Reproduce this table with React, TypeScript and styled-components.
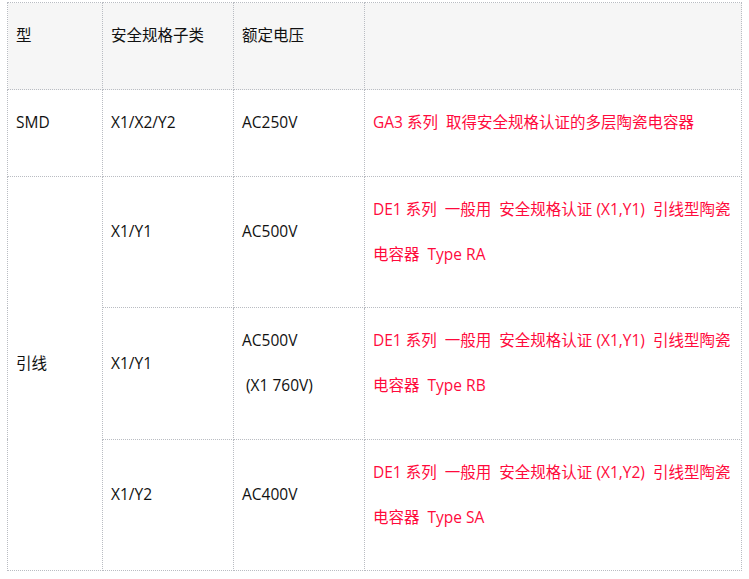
import * as React from "react";
import styled, { createGlobalStyle } from "styled-components";

const GlobalStyle = createGlobalStyle`
  html, body {
    margin: 0;
    padding: 0;
    background: #ffffff;
  }
`;

const Page = styled.div`
  padding: 2px 0 0 7px;
  font-family: "Open Sans", "Noto Sans CJK SC", sans-serif;
  font-size: 15.5px;
  color: #111111;
`;

const Table = styled.table`
  width: 734px;
  table-layout: fixed;
  border-collapse: collapse;
`;

const HeadCell = styled.th`
  padding: 10px 8px 11px;
  border: 1px dotted #b9bcc2;
  background-color: #f6f6f6;
  font-weight: 400;
  text-align: left;
  vertical-align: middle;
`;

const Cell = styled.td`
  padding: 10px 8px 10.6px;
  border: 1px dotted #b9bcc2;
  text-align: left;
  vertical-align: middle;
`;

const Text = styled.p<{ $accent?: boolean }>`
  margin: 0 0 20px;
  line-height: 45px;
  white-space: pre-wrap;
  color: ${p => (p.$accent ? "#ff0a3c" : "#111111")};
`;

const COLUMNS = [95, 131, 131, 377];

interface Row {
  kind?: { label: string; span: number };
  sub: string;
  voltage: string[];
  series: string[];
}

const ROWS: Row[] = [
  {
    kind: { label: "SMD", span: 1 },
    sub: "X1/X2/Y2",
    voltage: ["AC250V"],
    series: ["GA3 系列  取得安全规格认证的多层陶瓷电容器"]
  },
  {
    kind: { label: "引线", span: 3 },
    sub: "X1/Y1",
    voltage: ["AC500V"],
    series: ["DE1 系列  一般用  安全规格认证 (X1,Y1)  引线型陶瓷", "电容器  Type RA"]
  },
  {
    sub: "X1/Y1",
    voltage: ["AC500V", "\u00a0(X1 760V)"],
    series: ["DE1 系列  一般用  安全规格认证 (X1,Y1)  引线型陶瓷", "电容器  Type RB"]
  },
  {
    sub: "X1/Y2",
    voltage: ["AC400V"],
    series: ["DE1 系列  一般用  安全规格认证 (X1,Y2)  引线型陶瓷", "电容器  Type SA"]
  }
];

function Lines({ lines, accent }: { lines: string[]; accent?: boolean }) {
  return (
    <Text $accent={accent}>
      {lines.map((line, i) => (
        <React.Fragment key={i}>
          {i > 0 && <br />}
          {line}
        </React.Fragment>
      ))}
    </Text>
  );
}

export default function App() {
  return (
    <Page>
      <GlobalStyle />
      <Table>
        <colgroup>
          {COLUMNS.map((w, i) => (
            <col key={i} style={{ width: w }} />
          ))}
        </colgroup>
        <thead>
          <tr>
            <HeadCell><Text>型</Text></HeadCell>
            <HeadCell><Text>安全规格子类</Text></HeadCell>
            <HeadCell><Text>额定电压</Text></HeadCell>
            <HeadCell />
          </tr>
        </thead>
        <tbody>
          {ROWS.map((row, i) => (
            <tr key={i}>
              {row.kind && (
                <Cell rowSpan={row.kind.span}>
                  <Text>{row.kind.label}</Text>
                </Cell>
              )}
              <Cell><Text>{row.sub}</Text></Cell>
              <Cell><Lines lines={row.voltage} /></Cell>
              <Cell><Lines lines={row.series} accent /></Cell>
            </tr>
          ))}
        </tbody>
      </Table>
    </Page>
  );
}
